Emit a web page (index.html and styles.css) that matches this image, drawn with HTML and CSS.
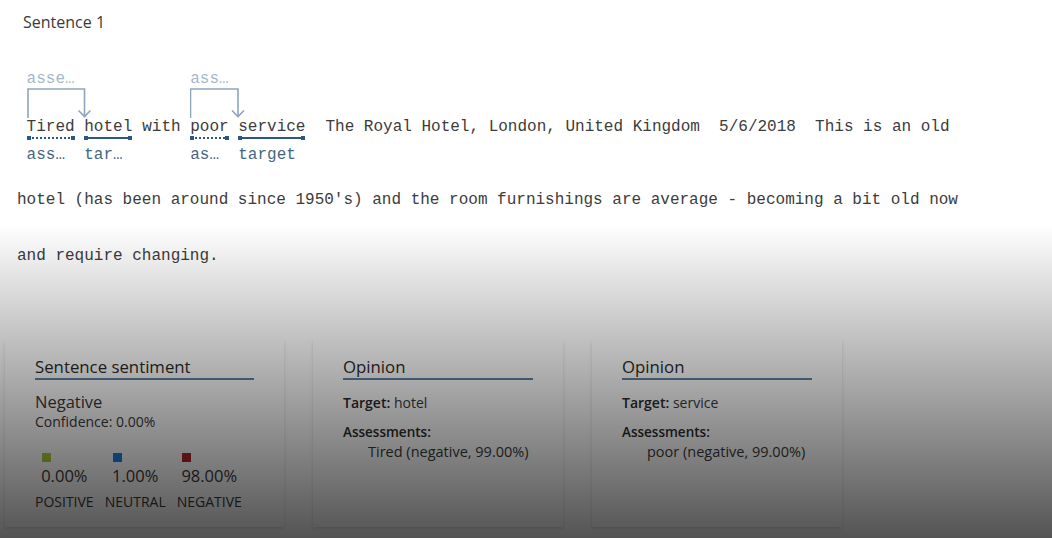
FILE: index.html
```html
<!DOCTYPE html>
<html lang="en">
<head>
<meta charset="utf-8">
<title>Sentence 1</title>
<link rel="stylesheet" href="styles.css">
</head>
<body>
<div class="page">
  <div class="sent-title">Sentence 1</div>

  <div class="text">
    <div class="line-first">
      <span class="plain"> </span>
      <div class="group">
        <div class="arc">
          <span class="arc-label">asse…</span>
          <svg class="bracket" width="106" height="30" viewBox="0 0 106 30">
            <path d="M1 30 V1 H57.5 V28.5" />
            <path d="M51.5 22.5 L57.5 28.5 L63.5 22.5" />
          </svg>
        </div>
        <div class="tokens">
          <div class="tok">
            <span class="w">Tired</span>
            <span class="mark dotted"></span>
            <span class="lb">ass…</span>
          </div>
          <span class="sp"> </span>
          <div class="tok">
            <span class="w">hotel</span>
            <span class="mark solid"></span>
            <span class="lb">tar…</span>
          </div>
        </div>
      </div>
      <span class="plain"> with </span>
      <div class="group">
        <div class="arc">
          <span class="arc-label">ass…</span>
          <svg class="bracket" width="116" height="30" viewBox="0 0 116 30">
            <path d="M0.5 30 V1 H48 V28.5" />
            <path d="M42 22.5 L48 28.5 L54 22.5" />
          </svg>
        </div>
        <div class="tokens">
          <div class="tok">
            <span class="w">poor</span>
            <span class="mark dotted"></span>
            <span class="lb">as…</span>
          </div>
          <span class="sp"> </span>
          <div class="tok">
            <span class="w">service</span>
            <span class="mark solid"></span>
            <span class="lb">target</span>
          </div>
        </div>
      </div>
      <span class="plain">  The Royal Hotel, London, United Kingdom  5/6/2018  This is an old</span>
    </div>
    <p class="line">hotel (has been around since 1950's) and the room furnishings are average - becoming a bit old now</p>
    <p class="line">and require changing.</p>
  </div>

  <div class="cards">
    <section class="card card-wide">
      <h3 class="card-title">Sentence sentiment</h3>
      <div class="sent-label">Negative</div>
      <div class="confidence">Confidence: 0.00%</div>
      <div class="scores">
        <div class="score">
          <div class="score-inner">
            <span class="swatch swatch-pos"></span>
            <div class="pct">0.00%</div>
          </div>
          <div class="score-name">POSITIVE</div>
        </div>
        <div class="score">
          <div class="score-inner">
            <span class="swatch swatch-neu"></span>
            <div class="pct">1.00%</div>
          </div>
          <div class="score-name">NEUTRAL</div>
        </div>
        <div class="score">
          <div class="score-inner">
            <span class="swatch swatch-neg"></span>
            <div class="pct">98.00%</div>
          </div>
          <div class="score-name">NEGATIVE</div>
        </div>
      </div>
    </section>

    <section class="card">
      <h3 class="card-title">Opinion</h3>
      <div class="target"><b>Target:</b> hotel</div>
      <div class="assess-head">Assessments:</div>
      <div class="assess">Tired (negative, 99.00%)</div>
    </section>

    <section class="card">
      <h3 class="card-title">Opinion</h3>
      <div class="target"><b>Target:</b> service</div>
      <div class="assess-head">Assessments:</div>
      <div class="assess">poor (negative, 99.00%)</div>
    </section>
  </div>
</div>
<div class="shade"></div>
</body>
</html>
```

FILE: styles.css
```css
* { box-sizing: border-box; }

html, body {
  margin: 0;
  padding: 0;
  background: #ffffff;
  height: 538px;
  overflow: hidden;
}

body {
  font-family: "Open Sans", "Noto Sans", sans-serif;
  color: #333333;
}

.page {
  padding: 12px 0 0 0;
}

.sent-title {
  margin-left: 23px;
  font-size: 16px;
  line-height: 20px;
  color: #3a3a3a;
}

/* ---------- annotated text ---------- */
.text {
  font-family: "Liberation Mono", "DejaVu Sans Mono", monospace;
  font-size: 16px;
  color: #3c3c3c;
  padding-left: 17px;
}

.line-first {
  display: flex;
  align-items: flex-start;
  margin-top: 38px;
}

.plain, .sp {
  white-space: pre;
  line-height: 19px;
}

.plain {
  margin-top: 48px;
}

.group {
  display: flex;
  flex-direction: column;
}

.arc {
  display: flex;
  flex-direction: column;
  height: 48px;
}

.arc-label {
  line-height: 18px;
  height: 18px;
  color: #a3b7cb;
}

.bracket {
  display: block;
  fill: none;
  stroke: #8ea5bc;
  stroke-width: 1.6;
}

.tokens {
  display: flex;
  align-items: flex-start;
}

.tok {
  display: flex;
  flex-direction: column;
}

.w {
  line-height: 19px;
  white-space: pre;
}

.mark {
  position: relative;
  height: 2px;
  margin: 0 1px;
}

.mark::before,
.mark::after {
  content: "";
  position: absolute;
  top: -1px;
  width: 4px;
  height: 4px;
  background: #2a5783;
}

.mark::before { left: -1px; }
.mark::after { right: -1px; }

.mark.solid {
  background: #2a5783;
}

.mark.dotted {
  background-image: repeating-linear-gradient(to right, #2a5783 0 2px, transparent 2px 4px);
}

.lb {
  margin-top: 6px;
  line-height: 20px;
  color: #46657f;
  white-space: pre;
}

.line {
  margin: 0;
  line-height: 56px;
  white-space: pre;
}

.text > .line:first-of-type {
  margin-top: 7px;
}

/* ---------- cards ---------- */
.cards {
  display: flex;
  gap: 29px;
  margin-top: 56px;
  padding-left: 5px;
}

.card {
  width: 250px;
  height: 187px;
  background: #ffffff;
  padding: 16px 30px 16px 30px;
  box-shadow: 0 1.6px 3.6px rgba(0, 0, 0, 0.13), 0 0.3px 0.9px rgba(0, 0, 0, 0.11);
}

.card-wide {
  width: 279px;
}

.card-title {
  margin: 0;
  font-size: 16.8px;
  font-weight: 400;
  line-height: 22px;
  color: #2b2b2b;
  border-bottom: 2px solid #5f84a8;
}

.sent-label {
  margin-top: 11px;
  font-size: 16.5px;
  line-height: 22px;
  color: #3a3a3a;
}

.confidence {
  font-size: 14px;
  line-height: 18px;
  color: #3a3a3a;
}

.scores {
  display: flex;
  margin-top: 22px;
}

.score {
  display: flex;
  flex-direction: column;
  align-items: center;
  margin-right: 11px;
}

.score-inner {
  display: flex;
  flex-direction: column;
  align-items: flex-start;
}

.swatch {
  width: 9px;
  height: 9px;
  margin-left: 1px;
}

.swatch-pos { background: #aacb3c; }
.swatch-neu { background: #1a82e6; }
.swatch-neg { background: #b3262d; }

.pct {
  margin-top: 4px;
  font-size: 16.5px;
  line-height: 20px;
  color: #3a3a3a;
}

.score-name {
  margin-top: 7px;
  font-size: 14px;
  line-height: 18px;
  color: #3a3a3a;
}

.target {
  margin-top: 14px;
  font-size: 14px;
  line-height: 18px;
  color: #3a3a3a;
}

.target b {
  font-weight: 600;
  color: #2b2b2b;
}

.assess-head {
  margin-top: 11px;
  font-size: 13.5px;
  line-height: 18px;
  font-weight: 600;
  color: #2b2b2b;
}

.assess {
  padding-left: 25px;
  margin-top: 2px;
  font-size: 14.5px;
  line-height: 18px;
  color: #3a3a3a;
}

/* video-style darkening overlay */
.shade {
  position: fixed;
  inset: 0;
  pointer-events: none;
  background: linear-gradient(to bottom,
    rgba(0, 0, 0, 0) 0px,
    rgba(0, 0, 0, 0) 225px,
    rgba(0, 0, 0, 0.67) 538px);
}
```
